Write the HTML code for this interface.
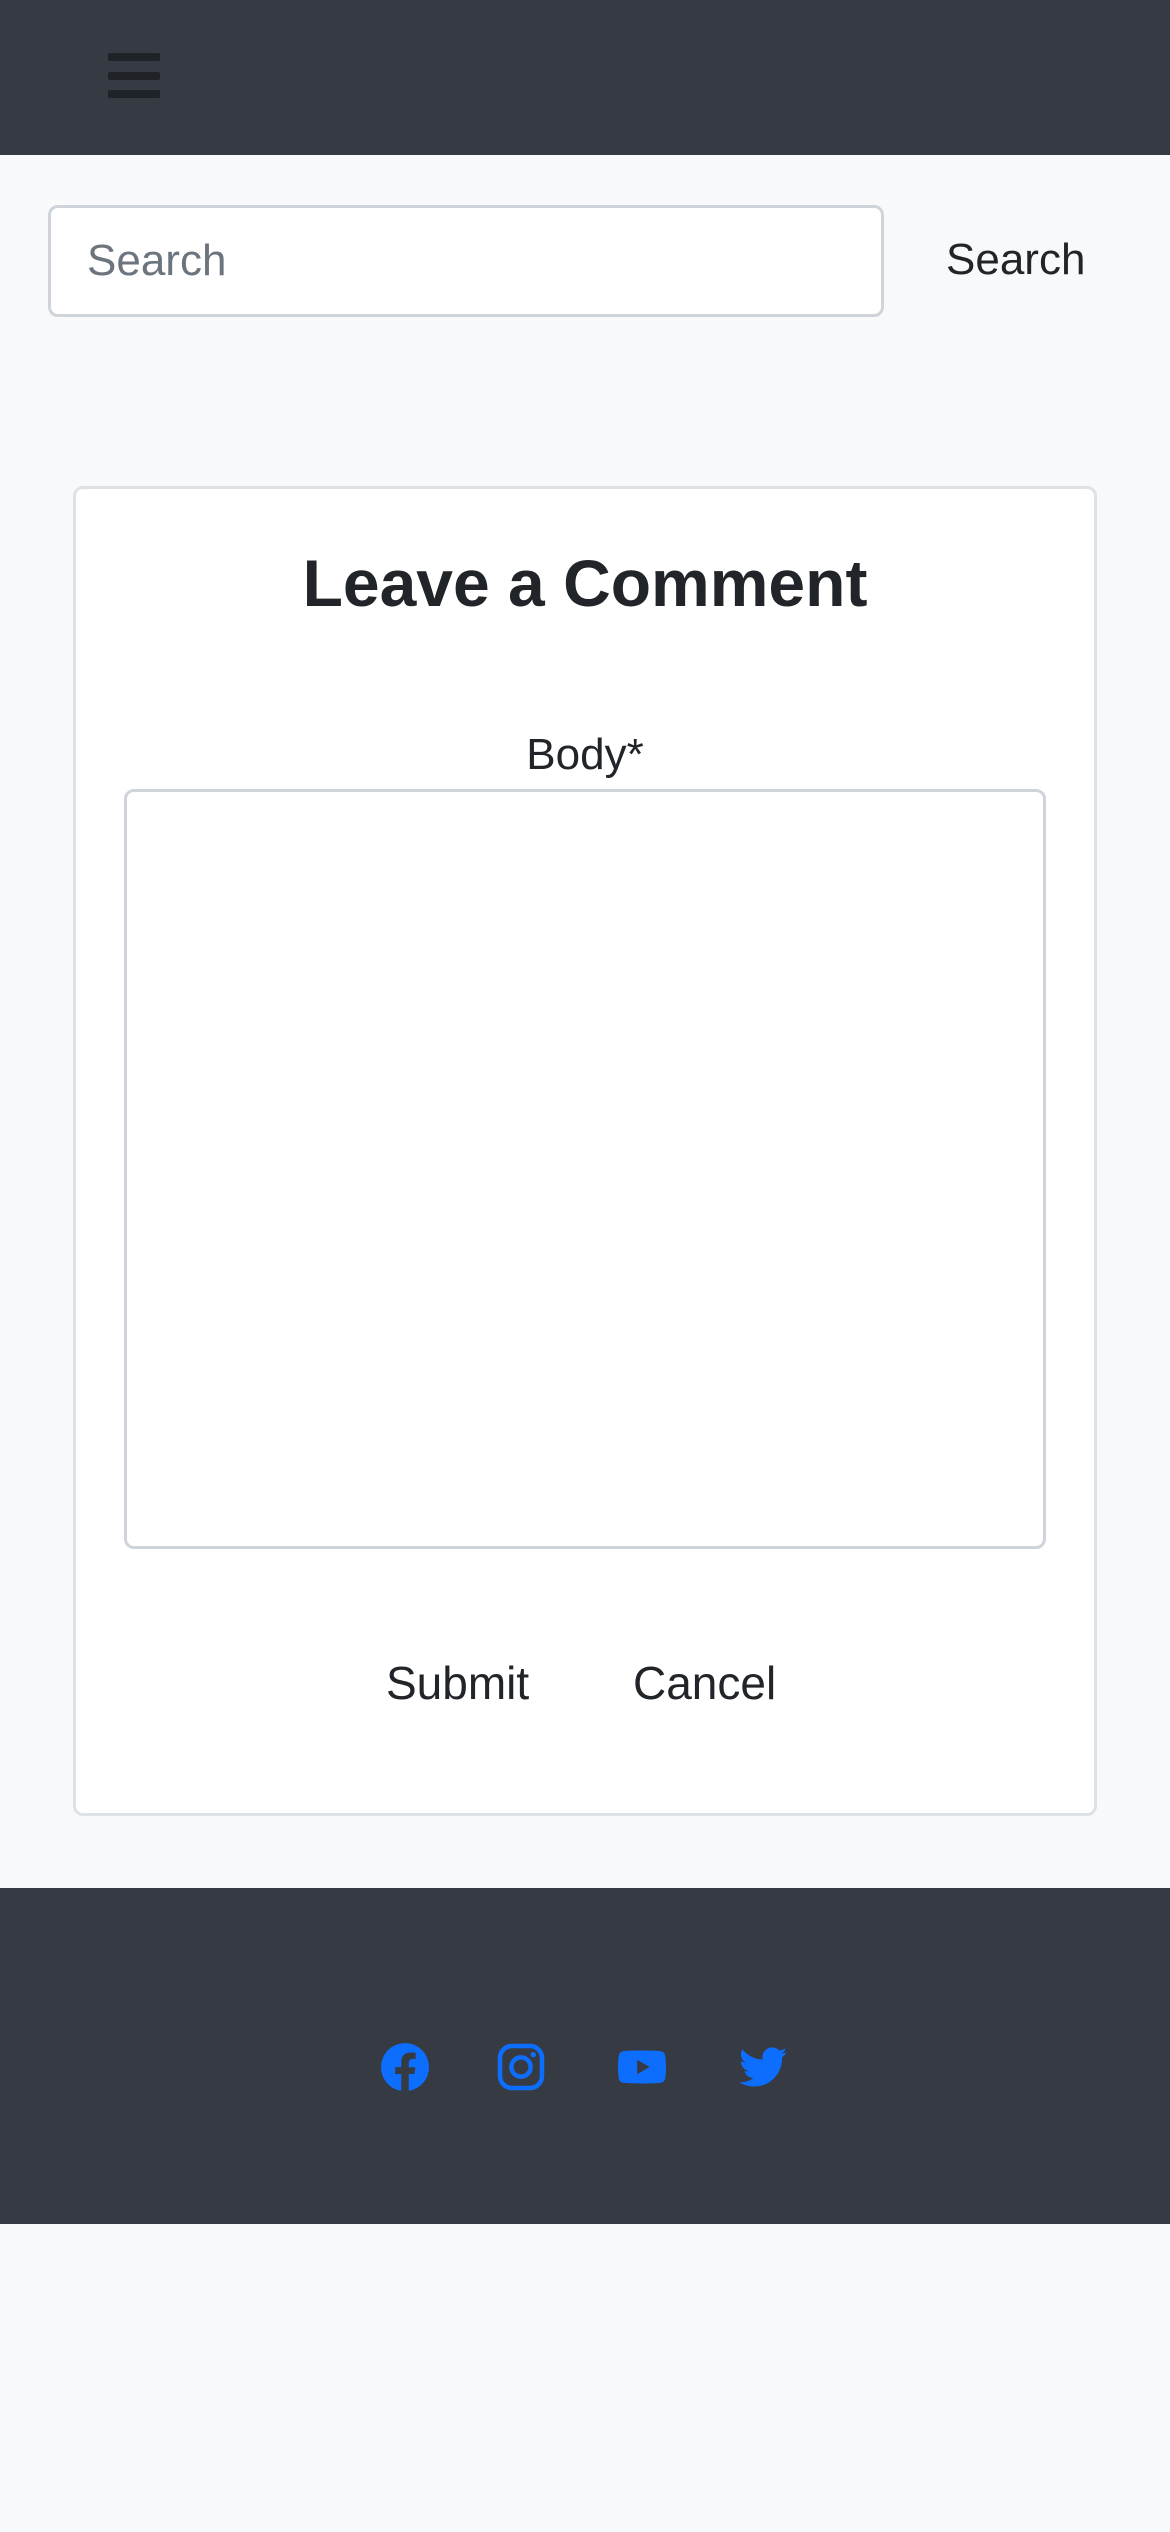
<!DOCTYPE html>
<html><head><meta charset="utf-8"><style>
*{box-sizing:border-box;margin:0;padding:0}
body{width:1170px;height:2532px;background:#f8f9fa;font-family:"Liberation Sans",sans-serif;color:#212529;position:relative;overflow:hidden}
.nav{position:absolute;left:0;top:0;width:1170px;height:155px;background:#363a43}
.bar{position:absolute;left:108px;width:52px;height:8px;background:#1f2226;border-radius:2px}
.inp{position:absolute;left:48px;top:205px;width:836px;height:112px;background:#fff;border:3px solid #ced4da;border-radius:10px;font-size:44px;color:#6c757d;padding-left:36px;line-height:106px}
.sbtn{position:absolute;left:946px;top:230px;font-size:44px;line-height:60px}
.card{position:absolute;left:73px;top:486px;width:1024px;height:1330px;background:#fff;border:3px solid #dee2e6;border-radius:10px}
h1{position:absolute;left:0;width:100%;top:541px;text-align:center;font-size:66px;font-weight:bold;line-height:84px}
.lbl{position:absolute;left:0;width:100%;top:727px;text-align:center;font-size:44px;line-height:56px}
.ta{position:absolute;left:124px;top:789px;width:922px;height:760px;border:3px solid #ced4da;border-radius:10px;background:#fff}
.b{position:absolute;top:1655px;font-size:46px;line-height:56px}
.foot{position:absolute;left:0;top:1888px;width:1170px;height:336px;background:#363a43}
</style></head><body>
<div class="nav"><div class="bar" style="top:53px"></div><div class="bar" style="top:72px"></div><div class="bar" style="top:90px"></div></div>
<div class="inp">Search</div>
<div class="sbtn">Search</div>
<div class="card"></div>
<h1>Leave a Comment</h1>
<div class="lbl">Body*</div>
<div class="ta"></div>
<div class="b" style="left:386px">Submit</div>
<div class="b" style="left:633px">Cancel</div>
<div class="foot"></div>
<svg style="left:381px;top:2043px;position:absolute" width="48" height="48" viewBox="0 0 16 16"><path fill="#0d6efd" d="M16 8.05A8 8 0 1 0 6.75 15.95V10.33H4.72V8.05h2.03V6.3c0-2 1.2-3.12 3.02-3.12.88 0 1.8.16 1.8.16v1.97h-1.01c-1 0-1.310.62-1.31 1.26v1.5h2.22l-.35 2.28H9.25V15.95A8 8 0 0 0 16 8.05z"/></svg>
<svg style="left:497px;top:2043px;position:absolute" width="48" height="48" viewBox="0 0 16 16"><rect x="1" y="1" width="14" height="14" rx="4" fill="none" stroke="#0d6efd" stroke-width="1.5"/><circle cx="8" cy="8" r="3.2" fill="none" stroke="#0d6efd" stroke-width="1.5"/><circle cx="12.1" cy="3.9" r=".9" fill="#0d6efd"/></svg>
<svg style="left:616px;top:2043px;position:absolute" width="52" height="48" viewBox="0 0 16 16"><path fill="#0d6efd" d="M15.7 4.1c-.2-.9-.8-1.3-1.7-1.4C12.5 2.5 8 2.5 8 2.5s-4.5 0-6 .2C1.1 2.8.5 3.2.3 4.1.1 5 0 6.5 0 8s.1 3 .3 3.9c.2.9.8 1.3 1.7 1.4 1.5.2 6 .2 6 .2s4.5 0 6-.2c.9-.1 1.5-.5 1.7-1.4.2-.9.3-2.4.3-3.9s-.1-3-.3-3.9zM6.4 10.4V5.6L10.5 8z"/></svg>
<svg style="left:739px;top:2043px;position:absolute" width="48" height="48" viewBox="0 0 16 16"><path fill="#0d6efd" d="M5.030 14.5c6.04 0 9.34-5 9.34-9.34v-.42A6.7 6.7 0 0 0 16 3.04a6.6 6.6 0 0 1-1.89.52A3.3 3.3 0 0 0 15.56 1.74a6.6 6.6 0 0 1-2.08.8 3.28 3.28 0 0 0-5.6 3A9.32 9.32 0 0 1 1.11 2.1a3.28 3.28 0 0 0 1.02 4.38A3.3 3.3 0 0 1 .64 6.07v.04a3.28 3.28 0 0 0 2.63 3.22 3.3 3.3 0 0 1-1.48.06 3.29 3.29 0 0 0 3.07 2.28A6.6 6.6 0 0 1 0 13.03a9.3 9.3 0 0 0 5.03 1.47"/></svg>
</body></html>
